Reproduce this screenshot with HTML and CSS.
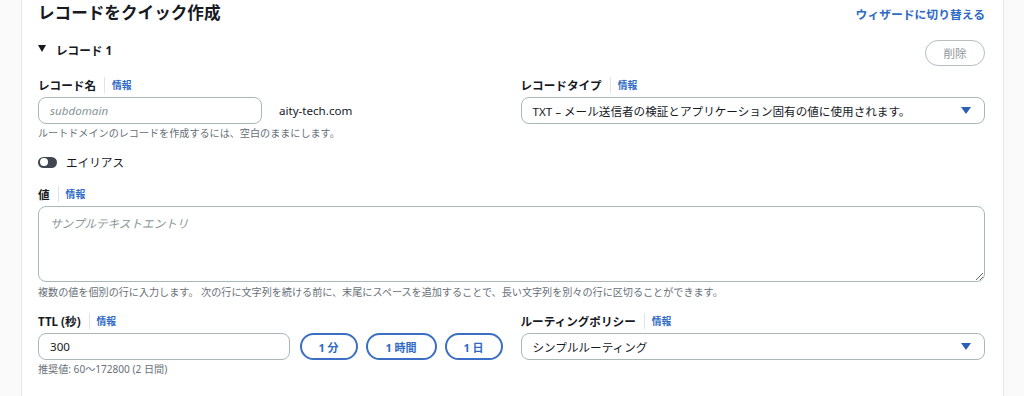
FILE: index.html
```html
<!DOCTYPE html>
<html lang="ja">
<head>
    <meta charset="UTF-8">
    <title>レコードをクイック作成</title>
    <link rel="stylesheet" href="styles.css">
</head>
<body>
    <div class="card">
        <div class="card-header">
            <h1>レコードをクイック作成</h1>
            <a class="switch-link" href="#">ウィザードに切り替える</a>
        </div>

        <div class="record-head">
            <div class="record-title"><span class="caret"></span>レコード 1</div>
            <button class="btn-delete">削除</button>
        </div>

        <div class="grid">
            <div class="field">
                <div class="label">レコード名<span class="sep"></span><a class="info" href="#">情報</a></div>
                <div class="name-row">
                    <input class="text-input name-input" type="text" placeholder="subdomain">
                    <span class="suffix">aity-tech.com</span>
                </div>
                <div class="help">ルートドメインのレコードを作成するには、空白のままにします。</div>
            </div>
            <div class="field">
                <div class="label">レコードタイプ<span class="sep"></span><a class="info" href="#">情報</a></div>
                <div class="select">
                    <span>TXT – メール送信者の検証とアプリケーション固有の値に使用されます。</span>
                    <span class="arrow"></span>
                </div>
            </div>
        </div>

        <div class="toggle-row">
            <span class="toggle"><span class="knob"></span></span>
            <span>エイリアス</span>
        </div>

        <div class="field value-field">
            <div class="label">値<span class="sep"></span><a class="info" href="#">情報</a></div>
            <textarea class="textarea" placeholder="サンプルテキストエントリ"></textarea>
            <div class="help">複数の値を個別の行に入力します。 次の行に文字列を続ける前に、末尾にスペースを追加することで、長い文字列を別々の行に区切ることができます。</div>
        </div>

        <div class="grid ttl-grid">
            <div class="field">
                <div class="label">TTL (秒)<span class="sep"></span><a class="info" href="#">情報</a></div>
                <div class="ttl-row">
                    <input class="text-input ttl-input" type="text" value="300">
                    <button class="btn-preset w-min">1 分</button>
                    <button class="btn-preset w-hour">1 時間</button>
                    <button class="btn-preset w-min">1 日</button>
                </div>
                <div class="help">推奨値: 60〜172800 (2 日間)</div>
            </div>
            <div class="field">
                <div class="label">ルーティングポリシー<span class="sep"></span><a class="info" href="#">情報</a></div>
                <div class="select">
                    <span>シンプルルーティング</span>
                    <span class="arrow"></span>
                </div>
            </div>
        </div>
    </div>
</body>
</html>
```

FILE: styles.css
```css
body {
    margin: 0;
    background: #fafafa;
    font-family: "Noto Sans", "Noto Sans CJK JP", sans-serif;
    color: #16191f;
    font-size: 11.6px;
}

.card {
    box-sizing: border-box;
    width: 983px;
    height: 396px;
    margin-left: 21px;
    padding: 0 18px 0 16px;
    background: #fff;
    border-left: 1px solid #e6e8ea;
    border-right: 1px solid #e6e8ea;
}

.card-header {
    display: flex;
    justify-content: space-between;
    align-items: center;
    height: 26px;
}

.card-header h1 {
    margin: 0;
    font-size: 16.6px;
    font-weight: bold;
    line-height: 26px;
}

.switch-link {
    color: #2e6ac4;
    font-size: 11.8px;
    font-weight: bold;
    text-decoration: none;
}

.record-head {
    display: flex;
    justify-content: space-between;
    align-items: flex-start;
    margin-top: 14px;
}

.record-title {
    display: flex;
    align-items: center;
    line-height: 18px;
    margin-top: 2px;
    font-size: 11.6px;
    font-weight: bold;
}

.caret {
    width: 0;
    height: 0;
    border-left: 4px solid transparent;
    border-right: 4px solid transparent;
    border-top: 7px solid #16191f;
    margin-right: 10px;
    margin-top: -6px;
}

.btn-delete {
    width: 60px;
    height: 26px;
    border: 1.5px solid #b6bec0;
    border-radius: 13px;
    background: #fff;
    color: #8d9596;
    font-family: inherit;
    font-size: 11.6px;
    padding: 0;
}

.grid {
    display: grid;
    grid-template-columns: minmax(0, 1fr) minmax(0, 1fr);
    column-gap: 18px;
    margin-top: 11px;
}

.label {
    display: flex;
    align-items: center;
    height: 16px;
    font-weight: bold;
    font-size: 11.6px;
}

.sep {
    width: 1px;
    height: 16px;
    background: #e1e4e6;
    margin: 0 7px 0 8px;
}

.info {
    color: #2e6ac4;
    font-size: 9.8px;
    font-weight: bold;
    text-decoration: none;
}

.text-input {
    box-sizing: border-box;
    height: 27px;
    border: 1px solid #aab7b8;
    border-radius: 8px;
    padding: 0 11px;
    font-family: inherit;
    font-size: 11.6px;
    color: #16191f;
    outline: none;
}

.text-input::placeholder,
.textarea::placeholder {
    color: #879596;
    font-style: italic;
}

.name-row,
.ttl-row {
    display: flex;
    align-items: center;
    margin-top: 4px;
}

.name-input {
    width: 224px;
}

.suffix {
    margin-left: 17px;
}

.help {
    color: #687078;
    font-size: 10.1px;
    line-height: 14px;
    margin-top: 2px;
}

.select {
    box-sizing: border-box;
    display: flex;
    justify-content: space-between;
    align-items: center;
    height: 27px;
    margin-top: 4px;
    padding: 0 13px 0 11px;
    border: 1px solid #aab7b8;
    border-radius: 8px;
}

.arrow {
    width: 0;
    height: 0;
    border-left: 5px solid transparent;
    border-right: 5px solid transparent;
    border-top: 7px solid #2b5fb5;
}

.toggle-row {
    display: flex;
    align-items: center;
    height: 16px;
    margin-top: 14px;
}

.toggle {
    display: flex;
    align-items: center;
    box-sizing: border-box;
    width: 19px;
    height: 11px;
    border-radius: 6px;
    background: #414750;
    padding-left: 1.5px;
    margin-right: 9px;
}

.knob {
    width: 8px;
    height: 8px;
    border-radius: 50%;
    background: #fff;
}

.value-field {
    margin-top: 16px;
}

.textarea {
    display: block;
    box-sizing: border-box;
    width: 100%;
    height: 76px;
    margin-top: 4px;
    padding: 8px 11px;
    border: 1px solid #aab7b8;
    border-radius: 8px;
    font-family: inherit;
    font-size: 11.6px;
    outline: none;
}

.value-field .help {
    margin-top: 3px;
}

.ttl-grid {
    margin-top: 14px;
}

.ttl-input {
    width: 252px;
    margin-right: 10px;
}

.btn-preset {
    flex-shrink: 0;
    height: 27px;
    margin-right: 8px;
    padding: 0;
    border: 2px solid #3b6ec4;
    border-radius: 14px;
    background: #fff;
    color: #2e6ac4;
    font-family: inherit;
    font-size: 11px;
    font-weight: bold;
}

.btn-preset:last-child {
    margin-right: 0;
}

.w-min {
    width: 58px;
}

.w-hour {
    width: 71px;
}
```
